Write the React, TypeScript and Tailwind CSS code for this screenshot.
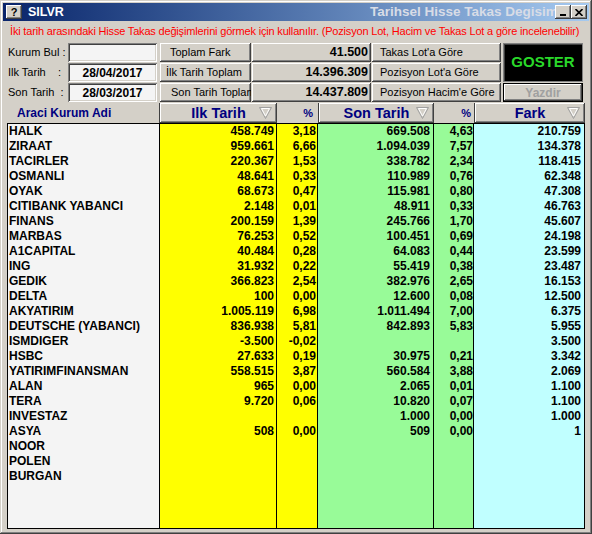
import React from 'react';

type Row = [string, string, string, string, string, string];

const ROWS: Row[] = [
  ['HALK', '458.749', '3,18', '669.508', '4,63', '210.759'],
  ['ZIRAAT', '959.661', '6,66', '1.094.039', '7,57', '134.378'],
  ['TACIRLER', '220.367', '1,53', '338.782', '2,34', '118.415'],
  ['OSMANLI', '48.641', '0,33', '110.989', '0,76', '62.348'],
  ['OYAK', '68.673', '0,47', '115.981', '0,80', '47.308'],
  ['CITIBANK YABANCI', '2.148', '0,01', '48.911', '0,33', '46.763'],
  ['FINANS', '200.159', '1,39', '245.766', '1,70', '45.607'],
  ['MARBAS', '76.253', '0,52', '100.451', '0,69', '24.198'],
  ['A1CAPITAL', '40.484', '0,28', '64.083', '0,44', '23.599'],
  ['ING', '31.932', '0,22', '55.419', '0,38', '23.487'],
  ['GEDIK', '366.823', '2,54', '382.976', '2,65', '16.153'],
  ['DELTA', '100', '0,00', '12.600', '0,08', '12.500'],
  ['AKYATIRIM', '1.005.119', '6,98', '1.011.494', '7,00', '6.375'],
  ['DEUTSCHE (YABANCI)', '836.938', '5,81', '842.893', '5,83', '5.955'],
  ['ISMDIGER', '-3.500', '-0,02', '', '', '3.500'],
  ['HSBC', '27.633', '0,19', '30.975', '0,21', '3.342'],
  ['YATIRIMFINANSMAN', '558.515', '3,87', '560.584', '3,88', '2.069'],
  ['ALAN', '965', '0,00', '2.065', '0,01', '1.100'],
  ['TERA', '9.720', '0,06', '10.820', '0,07', '1.100'],
  ['INVESTAZ', '', '', '1.000', '0,00', '1.000'],
  ['ASYA', '508', '0,00', '509', '0,00', '1'],
  ['NOOR', '', '', '', '', ''],
  ['POLEN', '', '', '', '', ''],
  ['BURGAN', '', '', '', '', ''],
];

// classic win32 bevels
const raised =
  'shadow-[inset_-1px_-1px_#404040,inset_1px_1px_#ffffff,inset_-2px_-2px_#808080,inset_2px_2px_#d4d0c8]';
const sunken =
  'shadow-[inset_1px_1px_#808080,inset_-1px_-1px_#ffffff,inset_2px_2px_#404040,inset_-2px_-2px_#d4d0c8]';

function SortArrow() {
  return (
    <svg width="13" height="12" viewBox="0 0 13 12" className="shrink-0">
      <polygon points="0.5,0.5 12.5,0.5 6.5,11.5" fill="none" stroke="#a0a0a0" strokeWidth="1" />
      <polygon points="2.5,1.5 10.5,1.5 6.5,9" fill="none" stroke="#ffffff" strokeWidth="1" />
    </svg>
  );
}

function HeadButton({ label, width }: { label: string; width: string }) {
  return (
    <div className={`${width} h-full flex items-center bg-[#d4d0c8] border-l border-[#404040] ${raised}`}>
      <span className="flex-1 text-center pl-[18px] text-[#000080] font-bold text-[14.5px] leading-none">
        {label}
      </span>
      <span className="mr-[5px]">
        <SortArrow />
      </span>
    </div>
  );
}

function Cells({ row }: { row: Row | null }) {
  const r = row ?? ['', '', '', '', '', ''];
  return (
    <>
      <div className="w-[152px] border-r border-black bg-[#f4f4f4] pl-[1px] whitespace-nowrap overflow-hidden">
        {r[0]}
      </div>
      <div className="w-[117px] border-r border-black bg-[#ffff00] pr-[2px] text-right">{r[1]}</div>
      <div className="w-[41px] border-r border-black bg-[#ffff00] pr-[1px] text-right">{r[2]}</div>
      <div className="w-[116px] border-r border-black bg-[#98fb98] pr-[3px] text-right">{r[3]}</div>
      <div className="w-[40px] border-r border-black bg-[#98fb98] text-right">{r[4]}</div>
      <div className="flex-1 bg-[#c0ffff] pr-[3px] text-right">{r[5]}</div>
    </>
  );
}

export default function App() {
  return (
    <div
      className={`w-[592px] h-[534px] bg-[#d4d0c8] p-[3px] flex flex-col overflow-hidden font-['Liberation_Sans',Arial,sans-serif] shadow-[inset_-1px_-1px_#404040,inset_1px_1px_#d4d0c8,inset_-2px_-2px_#808080,inset_2px_2px_#ffffff]`}
    >
      {/* Title bar */}
      <div className="h-[18px] flex items-center bg-linear-to-r from-[#0a246a] to-[#a6caf0] pl-[3px] pr-[2px]">
        <div className={`w-[16px] h-[14px] bg-[#d4d0c8] flex items-center justify-center text-black font-bold text-[11px] leading-none ${raised}`}>
          ?
        </div>
        <span className="ml-[6px] text-white font-bold text-[12.5px] leading-none">SILVR</span>
        <div className="flex-1 min-w-0 overflow-hidden whitespace-nowrap pl-[306px] text-[#d8dce6] font-bold text-[13.5px] leading-none">
          Tarihsel Hisse Takas Degisimleri
        </div>
        <div className={`w-[16px] h-[14px] bg-[#d4d0c8] flex items-end justify-center pb-[3px] ${raised}`}>
          <div className="w-[6px] h-[2px] bg-black" />
        </div>
        <div className={`w-[16px] h-[14px] bg-[#d4d0c8] flex items-center justify-center ${raised}`}>
          <svg width="8" height="7" viewBox="0 0 8 7">
            <path d="M0.5 0 L7.5 7 M7.5 0 L0.5 7" stroke="black" strokeWidth="1.6" />
          </svg>
        </div>
      </div>

      <div className="flex-1 flex flex-col px-[4px] pb-[2px]">
        {/* Info line */}
        <div className="h-[20px] flex items-center pl-[3px] text-[#ff0000] text-[11px] tracking-[-0.18px] whitespace-nowrap overflow-hidden">
          İki tarih arasındaki Hisse Takas değişimlerini görmek için kullanılır. (Pozisyon Lot, Hacim ve Takas Lot a göre incelenebilir)
        </div>

        {/* Controls */}
        <div className="mt-[2px] flex text-[11px] text-black">
          <div className="flex flex-col gap-[1px]">
            <div className="h-[19px] flex items-center">
              <span className="w-[61px] pl-[1px] whitespace-pre">Kurum Bul :</span>
              <div className={`w-[89px] h-full bg-[#f4f4f4] ${sunken}`} />
              <div className={`ml-[3px] w-[91px] h-full flex items-center pl-[10px] bg-[#d4d0c8] ${raised}`}>
                Toplam Fark
              </div>
              <div className={`ml-[1px] w-[119px] h-full flex items-center justify-end pr-[3px] bg-[#d4d0c8] font-bold text-[12.5px] ${raised}`}>
                41.500
              </div>
              <div className={`ml-[1px] w-[129px] h-full flex items-center pl-[8px] bg-[#d4d0c8] ${raised}`}>
                Takas Lot'a Göre
              </div>
            </div>
            <div className="h-[19px] flex items-center">
              <span className="w-[61px] pl-[1px] whitespace-pre">Ilk Tarih    :</span>
              <div className={`w-[89px] h-full flex items-center justify-center bg-[#f4f4f4] font-bold text-[12px] ${sunken}`}>
                28/04/2017
              </div>
              <div className={`ml-[3px] w-[91px] h-full flex items-center pl-[6px] bg-[#d4d0c8] whitespace-nowrap overflow-hidden ${raised}`}>
                İlk Tarih Toplam
              </div>
              <div className={`ml-[1px] w-[119px] h-full flex items-center justify-end pr-[3px] bg-[#d4d0c8] font-bold text-[12.5px] ${raised}`}>
                14.396.309
              </div>
              <div className={`ml-[1px] w-[129px] h-full flex items-center pl-[8px] bg-[#d4d0c8] ${raised}`}>
                Pozisyon Lot'a Göre
              </div>
            </div>
            <div className="h-[19px] flex items-center">
              <span className="w-[61px] pl-[1px] whitespace-pre">Son Tarih  :</span>
              <div className={`w-[89px] h-full flex items-center justify-center bg-[#f4f4f4] font-bold text-[12px] ${sunken}`}>
                28/03/2017
              </div>
              <div className={`ml-[3px] w-[91px] h-full flex items-center pl-[11px] bg-[#d4d0c8] whitespace-nowrap overflow-hidden ${raised}`}>
                Son Tarih Toplam
              </div>
              <div className={`ml-[1px] w-[119px] h-full flex items-center justify-end pr-[3px] bg-[#d4d0c8] font-bold text-[12.5px] ${raised}`}>
                14.437.809
              </div>
              <div className={`ml-[1px] w-[129px] h-full flex items-center pl-[8px] bg-[#d4d0c8] whitespace-nowrap ${raised}`}>
                Pozisyon Hacim'e Göre
              </div>
            </div>
          </div>
          <div className="ml-[2px] flex flex-col gap-[1px]">
            <div className="w-[80px] h-[39px] bg-black border border-[#808080] shadow-[inset_1px_1px_#404040] flex items-center justify-center text-[#2ad82a] font-bold text-[15px]">
              GOSTER
            </div>
            <div className={`w-[80px] h-[19px] border border-black bg-[#d4d0c8] flex items-center justify-center text-[#a0a0a0] font-bold text-[12px] ${raised}`}>
              Yazdir
            </div>
          </div>
        </div>

        {/* Column headers */}
        <div className="mt-[1px] h-[20px] flex">
          <div className="w-[152px] flex items-center pl-[10px] text-[#000080] font-bold text-[12px]">Araci Kurum Adi</div>
          <HeadButton label="Ilk Tarih" width="w-[118px]" />
          <div className="w-[41px] flex items-center justify-end pr-[5px] text-[#000080] font-bold text-[11px]">%</div>
          <HeadButton label="Son Tarih" width="w-[116px]" />
          <div className="w-[40px] flex items-center justify-end pr-[3px] text-[#000080] font-bold text-[11px]">%</div>
          <HeadButton label="Fark" width="flex-1" />
        </div>

        {/* Grid */}
        <div className="flex-1 flex flex-col border border-black text-[12px] font-bold text-black leading-[15px]">
          {ROWS.map((row) => (
            <div key={row[0]} className="h-[15px] flex">
              <Cells row={row} />
            </div>
          ))}
          <div className="flex-1 flex">
            <Cells row={null} />
          </div>
        </div>
      </div>
    </div>
  );
}
